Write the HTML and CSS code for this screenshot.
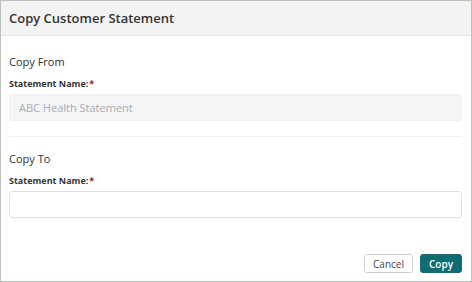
FILE: index.html
```html
<!DOCTYPE html>
<html lang="en">
<head>
    <meta charset="UTF-8">
    <meta name="viewport" content="width=device-width, initial-scale=1.0">
    <title>Copy Customer Statement</title>
    <link rel="stylesheet" href="styles.css">
</head>
<body>

    <div class="dialog">
        <header class="dialog-header">
            <h1>Copy Customer Statement</h1>
        </header>

        <main class="dialog-body">
            <!-- Source statement -->
            <section class="group">
                <h2>Copy From</h2>
                <label class="field-label">Statement Name:<span class="required">*</span></label>
                <input type="text" class="field-input" value="ABC Health Statement" disabled>
            </section>

            <hr class="divider">

            <!-- Target statement -->
            <section class="group">
                <h2>Copy To</h2>
                <label class="field-label">Statement Name:<span class="required">*</span></label>
                <input type="text" class="field-input">
            </section>
        </main>

        <footer class="dialog-footer">
            <button class="btn btn-cancel">Cancel</button>
            <button class="btn btn-copy">Copy</button>
        </footer>
    </div>

</body>
</html>
```

FILE: styles.css
```css
html, body {
    margin: 0;
    padding: 0;
    background: #fff;
}

body {
    font-family: 'Open Sans', sans-serif;
    color: #333;
}

.dialog {
    width: 472px;
    height: 282px;
    box-sizing: border-box;
    border: 1px solid #b9c2bb;
    display: flex;
    flex-direction: column;
}

.dialog-header {
    height: 34px;
    background-color: #f3f3f3;
    border-bottom: 1px solid #e4e4e4;
    padding: 0 8px;
    display: flex;
    align-items: center;
}

.dialog-header h1 {
    margin: 0;
    font-size: 13px;
    font-weight: 600;
    color: #333;
}

.dialog-body {
    flex: 1;
    padding: 17px 9px 0 8px;
}

.group h2 {
    margin: 0;
    font-size: 11px;
    font-weight: 400;
    line-height: 18px;
    color: #333;
}

.field-label {
    display: block;
    margin-top: 6px;
    font-size: 9px;
    font-weight: 700;
    line-height: 14px;
    color: #333;
}

.required {
    color: #a8171d;
    margin-left: 1px;
}

.field-input {
    display: block;
    width: 100%;
    height: 27px;
    margin-top: 3px;
    box-sizing: border-box;
    padding: 0 9px;
    border: 1px solid #e0e0e0;
    border-radius: 3px;
    font-family: 'Open Sans', sans-serif;
    font-size: 11px;
    color: #333;
    background-color: #fff;
}

.field-input:disabled {
    background-color: #f3f4f5;
    border-color: #f0f1f2;
    color: #a9adb2;
}

.divider {
    margin: 15px 0 13px;
    border: none;
    border-top: 1px solid #f1f1f1;
}

.dialog-footer {
    display: flex;
    justify-content: flex-end;
    gap: 7px;
    padding: 0 9px 8px;
}

.btn {
    height: 19px;
    padding: 0 8px;
    border-radius: 3px;
    font-family: 'Open Sans', sans-serif;
    font-size: 10px;
    cursor: pointer;
}

.btn-cancel {
    width: 49px;
    background-color: #fff;
    border: 1px solid #cfcfcf;
    color: #444;
}

.btn-copy {
    width: 42px;
    background-color: #0e6d73;
    border: 1px solid #0e6d73;
    color: #fff;
    font-weight: 600;
}
```
